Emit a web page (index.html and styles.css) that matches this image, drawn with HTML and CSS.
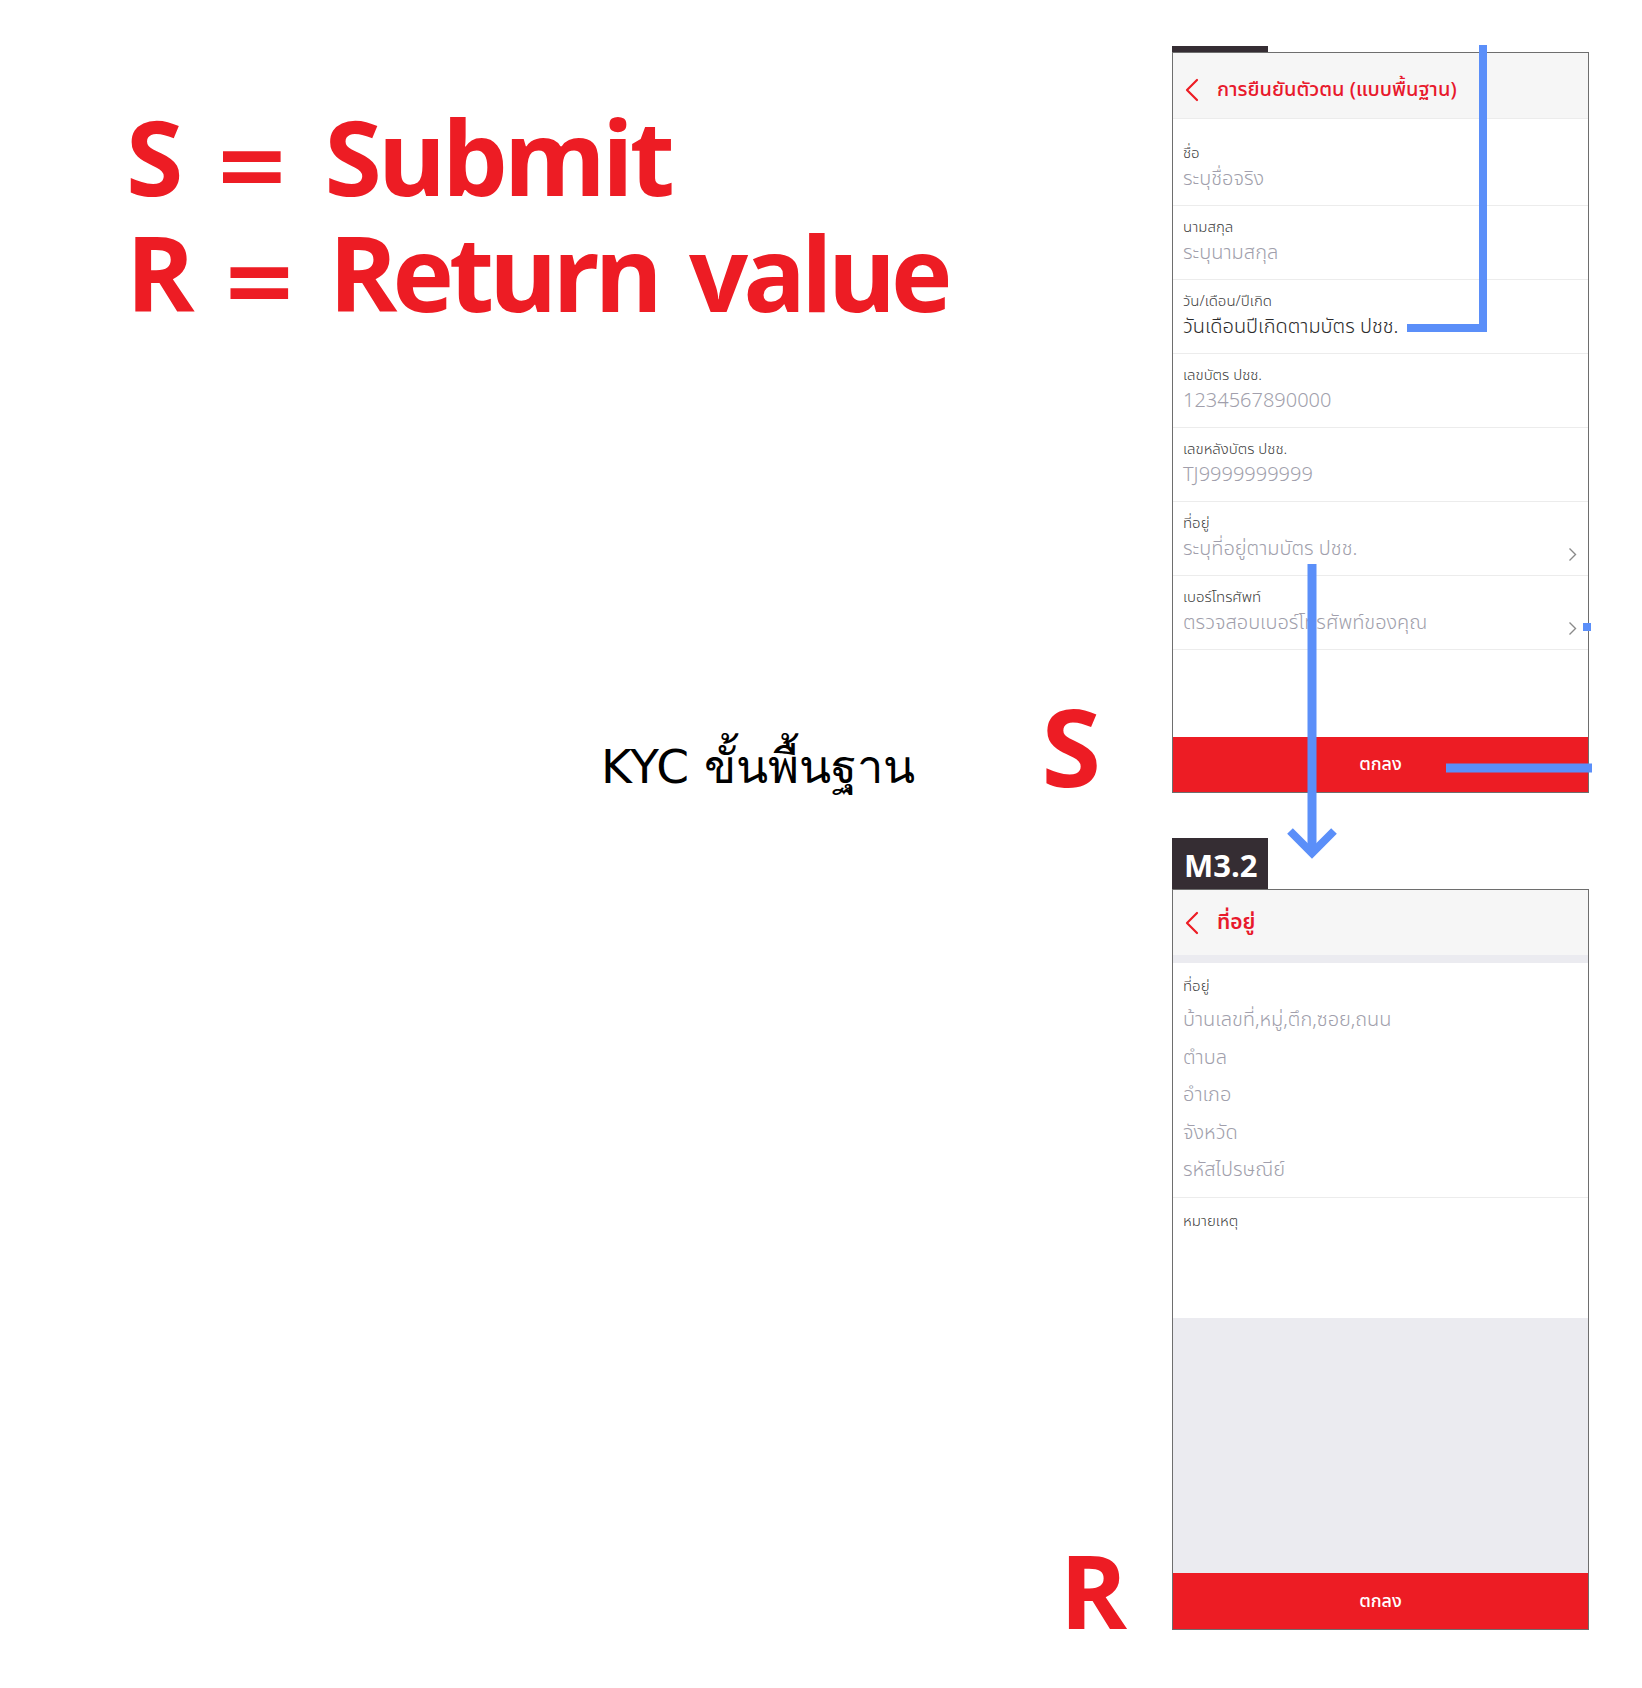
FILE: index.html
```html
<!DOCTYPE html>
<html lang="th">
<head>
<meta charset="utf-8">
<title>KYC ขั้นพื้นฐาน</title>
<link rel="stylesheet" href="styles.css">
</head>
<body>
<div class="page">
  <div class="board">
    <div class="side side-top">
      <div class="legend">
        <div class="legend-line">S <span class="eq">=</span> Submit</div>
        <div class="legend-line legend-line-long">R <span class="eq">=</span> Return value</div>
      </div>
      <div class="caption">
        <span class="caption-text">KYC ขั้นพื้นฐาน</span>
        <span class="marker marker-s">S</span>
      </div>
    </div>

    <div class="screen screen-one">
      <div class="tab tab-sliver"></div>
      <div class="phone phone-one">
        <div class="header header-one">
          <svg class="back" width="14" height="24" viewBox="0 0 14 24"><path d="M12 2 L2 12 L12 22" fill="none" stroke="#ed1c24" stroke-width="2.2" stroke-linecap="round" stroke-linejoin="round"/></svg>
          <span class="header-title">การยืนยันตัวตน (แบบพื้นฐาน)</span>
        </div>
        <div class="list">
          <div class="row"><div class="label">ชื่อ</div><div class="value">ระบุชื่อจริง</div></div>
          <div class="row"><div class="label">นามสกุล</div><div class="value">ระบุนามสกุล</div></div>
          <div class="row"><div class="label">วัน/เดือน/ปีเกิด</div><div class="value value-filled">วันเดือนปีเกิดตามบัตร ปชช.</div></div>
          <div class="row"><div class="label">เลขบัตร ปชช.</div><div class="value">1234567890000</div></div>
          <div class="row"><div class="label">เลขหลังบัตร ปชช.</div><div class="value">TJ9999999999</div></div>
          <div class="row row-link"><div class="label">ที่อยู่</div><div class="value">ระบุที่อยู่ตามบัตร ปชช.</div>
            <svg class="chev" width="9" height="15" viewBox="0 0 9 15"><path d="M1.5 1.5 L7.5 7.5 L1.5 13.5" fill="none" stroke="#8a8a8a" stroke-width="1.4"/></svg></div>
          <div class="row row-link"><div class="label">เบอร์โทรศัพท์</div><div class="value">ตรวจสอบเบอร์โทรศัพท์ของคุณ</div>
            <svg class="chev" width="9" height="15" viewBox="0 0 9 15"><path d="M1.5 1.5 L7.5 7.5 L1.5 13.5" fill="none" stroke="#8a8a8a" stroke-width="1.4"/></svg></div>
        </div>
        <div class="filler"></div>
        <div class="button button-one">ตกลง</div>
      </div>
    </div>

    <div class="side side-bottom">
      <span class="marker marker-r">R</span>
    </div>

    <div class="screen screen-two">
      <div class="tab tab-label">M3.2</div>
      <div class="phone phone-two">
        <div class="header">
          <svg class="back" width="14" height="24" viewBox="0 0 14 24"><path d="M12 2 L2 12 L12 22" fill="none" stroke="#ed1c24" stroke-width="2.2" stroke-linecap="round" stroke-linejoin="round"/></svg>
          <span class="header-title header-title-bold">ที่อยู่</span>
        </div>
        <div class="strip"></div>
        <div class="section section-address">
          <div class="label">ที่อยู่</div>
          <div class="address-values">
            <div class="address-value">บ้านเลขที่,หมู่,ตึก,ซอย,ถนน</div>
            <div class="address-value">ตำบล</div>
            <div class="address-value">อำเภอ</div>
            <div class="address-value">จังหวัด</div>
            <div class="address-value">รหัสไปรษณีย์</div>
          </div>
        </div>
        <div class="section section-note">
          <div class="label">หมายเหตุ</div>
        </div>
        <div class="grey-area"></div>
        <div class="button button-two">ตกลง</div>
      </div>
    </div>
  </div>

  <svg class="annotations" width="1642" height="1688" viewBox="0 0 1642 1688">
    <g fill="none" stroke="#5b8ff9" stroke-width="8">
      <polyline points="1483,45 1483,328 1407,328" stroke-linejoin="miter"/>
      <line x1="1312" y1="564" x2="1312" y2="852" stroke-width="9"/>
      <polyline points="1290,831 1312,853 1334,831" stroke-width="8"/>
      <line x1="1446" y1="768" x2="1592" y2="768" stroke-width="9"/>
    </g>
    <rect x="1583" y="623" width="8" height="8" fill="#5b8ff9"/>
  </svg>
</div>
</body>
</html>
```

FILE: styles.css
```css
* { box-sizing: border-box; }

html, body {
  margin: 0;
  padding: 0;
  background: #ffffff;
}

.page {
  position: relative;
  width: 1642px;
  height: 1688px;
  overflow: hidden;
  font-family: "Noto Sans Thai", "Noto Sans", "DejaVu Sans", sans-serif;
}

.board {
  display: grid;
  grid-template-columns: 1172px 417px;
  grid-template-rows: 793px auto;
}

/* ---------- left side ---------- */
.side {
  display: flex;
  flex-direction: column;
}

.legend {
  padding-top: 98px;
  padding-left: 126px;
  font-family: "Open Sans", "Liberation Sans", sans-serif;
  font-weight: 700;
  font-size: 104px;
  line-height: 116px;
  letter-spacing: -4px;
  word-spacing: 11px;
  color: #ed1c24;
  white-space: nowrap;
}

.legend-line-long {
  letter-spacing: -5px;
  word-spacing: 9px;
}

.eq {
  font-family: "DejaVu Sans", sans-serif;
  font-weight: 700;
  font-size: 92px;
  line-height: 0;
  letter-spacing: 0;
}

.caption {
  display: flex;
  align-items: baseline;
  margin-top: 372px;
  padding-left: 601px;
  padding-right: 71px;
}

.caption-text {
  font-family: "DejaVu Sans", sans-serif;
  font-size: 47px;
  line-height: 30px;
  color: #000000;
}

.marker {
  font-family: "Open Sans", "Liberation Sans", sans-serif;
  font-weight: 700;
  color: #ed1c24;
  line-height: 80px;
}

.marker-s {
  margin-left: auto;
  font-size: 108px;
  position: relative;
  top: 4px;
}

.side-bottom {
  justify-content: flex-end;
  align-items: flex-end;
  padding-right: 45px;
}

.marker-r {
  font-size: 102px;
}

/* ---------- phone screens ---------- */
.screen {
  display: flex;
  flex-direction: column;
}

.screen-one { padding-top: 46px; }
.screen-two { padding-top: 45px; }

.tab {
  width: 96px;
  background: #352d33;
}

.tab-sliver { height: 6px; }

.tab-label {
  height: 51px;
  color: #ffffff;
  font-family: "Open Sans", "Liberation Sans", sans-serif;
  font-weight: 700;
  font-size: 31px;
  line-height: 51px;
  padding-left: 12px;
  padding-top: 2px;
}

.phone {
  display: flex;
  flex-direction: column;
  border: 1px solid #6e6e6e;
  background: #ffffff;
}

.phone-one { height: 741px; }
.phone-two { height: 741px; }

.header {
  display: flex;
  align-items: center;
  gap: 18px;
  height: 65px;
  padding-left: 12px;
  background: #f6f6f6;
  flex-shrink: 0;
}

.header-one {
  height: 66px;
  padding-top: 9px;
  border-bottom: 1px solid #ececec;
}

.back { display: block; flex-shrink: 0; }

.header-title {
  color: #e8192c;
  font-size: 20px;
  font-weight: 500;
  white-space: nowrap;
}

.header-title-bold {
  font-size: 21px;
  font-weight: 600;
}

.list {
  padding-top: 13px;
  flex-shrink: 0;
}

.row {
  position: relative;
  height: 74px;
  padding: 12px 10px 0 10px;
  border-bottom: 1px solid #ececec;
}

.label {
  font-size: 15px;
  line-height: 20px;
  font-weight: 300;
  color: #3c3c3c;
  white-space: nowrap;
}

.value {
  font-size: 20px;
  line-height: 30px;
  color: #a19fac;
  font-weight: 300;
  white-space: nowrap;
}

.value-filled { color: #2b2b2b; }

.chev {
  position: absolute;
  right: 11px;
  top: 45px;
}

.filler { flex: 1; }

.button {
  display: flex;
  align-items: center;
  justify-content: center;
  background: #ed1c24;
  color: #ffffff;
  font-size: 18px;
  font-weight: 500;
  flex-shrink: 0;
}

.button-one { height: 55px; }
.button-two { height: 56px; }

.strip {
  height: 8px;
  background: #ebebf0;
  flex-shrink: 0;
}

.section {
  padding: 12px 10px 0 10px;
  flex-shrink: 0;
}

.section .label { line-height: 24px; }

.section-address {
  height: 235px;
  border-bottom: 1px solid #ececec;
}

.address-values { margin-top: 3px; }

.address-value {
  font-size: 20px;
  line-height: 37.5px;
  font-weight: 300;
  color: #a19fac;
  white-space: nowrap;
}

.section-note { height: 120px; }

.grey-area {
  flex: 1;
  background: #ebebf0;
}

/* ---------- annotations overlay ---------- */
.annotations {
  position: absolute;
  left: 0;
  top: 0;
  pointer-events: none;
}
```
